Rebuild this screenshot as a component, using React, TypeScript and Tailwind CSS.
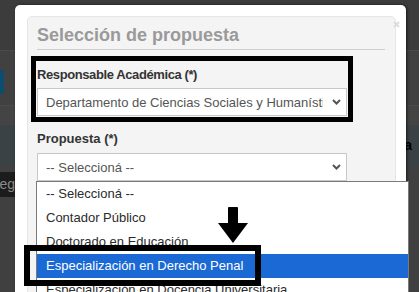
import React from "react";

function Chevron() {
  return (
    <svg width="9" height="6" viewBox="0 0 9 6" className="shrink-0">
      <path d="M1 1 L4.5 4.5 L8 1" fill="none" stroke="#555" strokeWidth="2" />
    </svg>
  );
}

function SelectBox({ text }: { text: string }) {
  return (
    <div className="flex h-[28px] w-[310px] items-center justify-between border border-[#c8c8c8] bg-white pl-[8px] pr-[5px] text-[13px] text-[#555]">
      <span className="w-[277px] overflow-hidden whitespace-nowrap leading-[15px]">{text}</span>
      <Chevron />
    </div>
  );
}

const items = [
  "-- Seleccioná --",
  "Contador Público",
  "Doctorado en Educación",
  "Especialización en Derecho Penal",
  "Especialización en Docencia Universitaria",
];

export default function App() {
  return (
    <div className="relative h-[292px] w-[419px] overflow-hidden bg-[#404040] font-['Liberation_Sans',Arial,sans-serif]">
      {/* background page (behind overlay) */}
      <div className="h-[50px] bg-[#3c3c3c]" />
      <div className="h-[1px] bg-[#4a4a4a]" />
      <div className="h-[54px] bg-[#414141] pt-[19px]">
        <div className="h-[24px] w-[4px] rounded-r-[2px] bg-[#0f4d70]" />
      </div>
      <div className="h-[1px] bg-[#4a4a4a]" />
      <div className="h-[19px] bg-[#444444]" />
      <div className="flex h-[40px] justify-end bg-[#3a4246] pr-[7px] pt-[12px] text-[14px] font-bold leading-[16px] text-black">
        a
      </div>
      <div className="h-[7px] bg-[#404040]" />
      <div className="flex h-[25px]">
        <div className="flex w-[15px] items-center justify-end overflow-hidden bg-[#1c1c1c] text-[14px] text-[#8a8a8a]">
          eg
        </div>
        <div className="flex-1 bg-[#404040]" />
      </div>

      {/* modal */}
      <div className="absolute left-[15px] top-[5px] h-[300px] w-[391px] rounded-[5px] bg-white pl-[12px] pt-[11px] shadow-[1px_0_3px_rgba(0,0,0,0.6)]">
        <div className="relative h-[290px] w-[369px] rounded-[5px] border border-[#e6e6e6] bg-[#f4f4f4] pl-[9px] pr-[10px] pt-[8px]">
          <svg width="7" height="7" viewBox="0 0 7 7" className="absolute left-[365px] top-[4px]">
            <path d="M1 1 L6 6 M6 1 L1 6" stroke="#dcdcdc" strokeWidth="2" />
          </svg>
          <div className="border-b border-[#cfcfcf] pb-[4px] text-[18px] font-bold leading-[20px] text-[#9a9a9a]">
            Selección de propuesta
          </div>
          <div className="-ml-[6px] mt-[6px] w-[322px] border-[5px] border-black pb-[1px] pl-[1px]">
            <div className="pt-[6px] text-[13px] font-bold leading-[15px] tracking-[-0.4px] text-[#333]">
              Responsable Académica (*)
            </div>
            <div className="mt-[6px]">
              <SelectBox text="Departamento de Ciencias Sociales y Humanísticas" />
            </div>
          </div>
          <div className="mt-[9px] text-[13px] font-bold leading-[15px] text-[#333]">Propuesta (*)</div>
          <div className="mt-[7px]">
            <SelectBox text="-- Seleccioná --" />
          </div>
        </div>
      </div>

      {/* open dropdown list */}
      <div className="absolute left-[36px] top-[181px] w-[373px] border border-[#7a7a7a] bg-white text-[13px]">
        {items.map((it, i) => (
          <div
            key={it}
            className={
              i === 3
                ? "flex h-[24px] items-center whitespace-nowrap bg-[#1a69d4] pl-[9px] text-white"
                : "flex h-[24px] items-center whitespace-nowrap pl-[9px] text-[#2b2b2b]"
            }
          >
            {it}
          </div>
        ))}
      </div>

      {/* annotation box around highlighted item */}
      <div className="absolute left-[24px] top-[245px] h-[41px] w-[237px] border-[6px] border-black" />

      {/* annotation arrow */}
      <svg width="32" height="37" viewBox="0 0 32 37" className="absolute left-[217px] top-[207px]">
        <path d="M12 0 H20 Q21 0 21 1 V16 H31 L16 36 L1 16 H11 V1 Q11 0 12 0 Z" fill="#000" />
      </svg>
    </div>
  );
}
